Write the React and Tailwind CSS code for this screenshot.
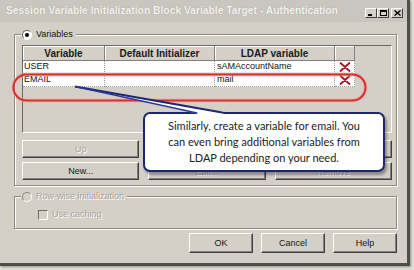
import React from "react";

function Btn({ label, disabled, className = "" }) {
  return (
    <div
      className={`flex items-center justify-center bg-[#d4d0c8] border border-t-white border-l-white border-r-[#404040] border-b-[#404040] shadow-[inset_-1px_-1px_0_#808080] text-[9px] leading-none ${
        disabled ? "text-[#a7a49d] [text-shadow:1px_1px_0_#fff]" : "text-[#151515]"
      } ${className}`}
    >
      {label}
    </div>
  );
}

function RedX() {
  return (
    <svg width="12" height="10" viewBox="0 0 12 10">
      <path d="M1.5 1 L10.5 9 M10.5 1 L1.5 9" stroke="#a3121b" strokeWidth="1.7" strokeLinecap="round" />
    </svg>
  );
}

function CapBtn({ children, className = "" }) {
  return (
    <div
      className={`w-[12px] h-[10px] bg-[#d4d0c8] border border-t-white border-l-white border-r-[#404040] border-b-[#404040] flex items-center justify-center ${className}`}
    >
      {children}
    </div>
  );
}

export default function App() {
  return (
    <div className="relative w-[414px] h-[270px] bg-[#dcdfd2] overflow-hidden font-['Liberation_Sans',Arial,sans-serif]">
      <div className="w-[410px] h-[266px] bg-[#d4d0c8] border-r-[3px] border-b-[3px] border-[#4e4d4a] shadow-[1px_1px_2px_rgba(0,0,0,0.35)] flex flex-col">
        {/* Title bar */}
        <div className="h-[22px] bg-[#c9c6bf] flex items-center pl-[6px] pr-[4px]">
          <div className="flex-1 whitespace-nowrap text-[10.3px] font-bold text-[#f4f3ef] [text-shadow:0_0_1px_rgba(120,118,110,0.6)]">
            Session Variable Initialization Block Variable Target - Authentication
          </div>
          <div className="flex items-center mt-[3px]">
            <CapBtn>
              <div className="w-[4px] h-[2px] bg-black mt-[4px] mr-[2px]" />
            </CapBtn>
            <CapBtn>
              <div className="w-[7px] h-[6px] border border-black border-t-2" />
            </CapBtn>
            <CapBtn className="ml-[2px]">
              <svg width="7" height="6" viewBox="0 0 7 6">
                <path d="M0.5 0.5 L6.5 5.5 M6.5 0.5 L0.5 5.5" stroke="#000" strokeWidth="1.4" />
              </svg>
            </CapBtn>
          </div>
        </div>

        {/* Content */}
        <div className="flex flex-col pl-[14px] pr-[10px]">
          {/* Variables group */}
          <div className="relative mt-[12px] h-[152px] border border-[#8c8981] shadow-[inset_1px_1px_0_#fff,1px_1px_0_#fff] pt-[10px] pl-[7px] pr-[4px]">
            <div className="absolute left-[6px] top-[-7px] flex items-center bg-[#d4d0c8] pl-[1px] pr-[3px] h-[13px]">
              <div className="w-[10px] h-[10px] rounded-full border border-t-[#6d6b66] border-l-[#6d6b66] border-r-white border-b-white bg-white flex items-center justify-center">
                <div className="w-[4px] h-[4px] rounded-full bg-black" />
              </div>
              <span className="ml-[4px] text-[9px] text-[#151515]">Variables</span>
            </div>

            {/* Table pane */}
            <div className="h-[88px] border border-t-[#6a6864] border-l-[#6a6864] border-r-white border-b-white bg-[#d4d0c8]">
              <div className="flex h-[15px] text-[10px] font-bold text-[#1a1a1a]">
                <div className="w-[82px] flex items-center justify-center border-r border-b border-[#808080] shadow-[inset_1px_1px_0_#fff]">Variable</div>
                <div className="w-[110px] flex items-center justify-center border-r border-b border-[#808080] shadow-[inset_1px_1px_0_#fff]">Default Initializer</div>
                <div className="w-[120px] flex items-center justify-center border-r border-b border-[#808080] shadow-[inset_1px_1px_0_#fff]">LDAP variable</div>
                <div className="w-[20px] border-r border-b border-[#808080] shadow-[inset_1px_1px_0_#fff]" />
              </div>
              {[
                ["USER", "sAMAccountName"],
                ["EMAIL", "mail"],
              ].map(([v, l]) => (
                <div key={v} className="flex h-[13px] text-[9px] text-[#111] bg-white w-[332px]">
                  <div className="w-[82px] pl-[1px] flex items-center border-r border-b border-dotted border-[#9a9a9a]">{v}</div>
                  <div className="w-[110px] border-r border-b border-dotted border-[#9a9a9a]" />
                  <div className="w-[120px] pl-[2px] flex items-center border-r border-b border-dotted border-[#9a9a9a]">{l}</div>
                  <div className="w-[20px] flex items-center justify-center border-r border-b border-dotted border-[#9a9a9a]">
                    <RedX />
                  </div>
                </div>
              ))}
            </div>

            {/* Buttons */}
            <div className="grid grid-cols-3 gap-x-[9px] gap-y-[4px] mt-[7px]">
              <Btn label="Up" disabled className="h-[18px]" />
              <Btn label="" disabled className="h-[18px]" />
              <Btn label="" disabled className="h-[18px]" />
              <Btn label="New..." className="h-[18px]" />
              <Btn label="Edit..." disabled className="h-[18px] pt-[3px]" />
              <Btn label="Remove" disabled className="h-[18px] pt-[3px]" />
            </div>
          </div>

          {/* Row-wise group */}
          <div className="relative mt-[10px] h-[33px] border border-[#8c8981] shadow-[inset_1px_1px_0_#fff,1px_1px_0_#fff] pt-[11px] pl-[23px]">
            <div className="absolute left-[6px] top-[-7px] flex items-center bg-[#d4d0c8] pl-[1px] pr-[3px] h-[13px]">
              <div className="w-[10px] h-[10px] rounded-full border border-t-[#8f8c85] border-l-[#8f8c85] border-r-white border-b-white bg-[#d4d0c8]" />
              <span className="ml-[4px] text-[9px] text-[#a7a49d] [text-shadow:1px_1px_0_#fff]">Row-wise initialization</span>
            </div>
            <div className="flex items-center">
              <div className="w-[10px] h-[10px] border border-t-[#6d6b66] border-l-[#6d6b66] border-r-white border-b-white bg-[#d4d0c8]" />
              <span className="ml-[4px] text-[9px] text-[#a7a49d] [text-shadow:1px_1px_0_#fff]">Use caching</span>
            </div>
          </div>

          {/* Bottom buttons */}
          <div className="flex justify-end gap-[8px] mt-[4px]">
            <Btn label="OK" className="w-[64px] h-[20px]" />
            <Btn label="Cancel" className="w-[64px] h-[20px]" />
            <Btn label="Help" className="w-[64px] h-[20px]" />
          </div>
        </div>
      </div>

      {/* Red highlight ring */}
      <svg className="absolute inset-0 pointer-events-none" width="414" height="270" viewBox="0 0 414 270">
        <rect x="13.5" y="74.5" width="352" height="26" rx="13" fill="none" stroke="#f0a0a0" strokeOpacity="0.45" strokeWidth="4.5" />
        <rect x="13.5" y="74.5" width="352" height="26" rx="13" fill="none" stroke="#d6302a" strokeWidth="2" />
      </svg>

      {/* Callout */}
      <div className="absolute left-[143px] top-[112px] w-[242px] h-[60px] bg-white border-2 border-[#1d2672] rounded-[7px] shadow-[2px_3px_3px_rgba(0,0,0,0.35)] flex items-center justify-center text-center text-[11px] leading-[16px] text-[#222] font-['Lato','Open_Sans',sans-serif]">
        <p>
          Similarly, create a variable for email. You
          <br />
          can even bring additional variables from
          <br />
          LDAP depending on your need.
        </p>
      </div>

      {/* Callout pointer */}
      <svg className="absolute inset-0 pointer-events-none" width="414" height="270" viewBox="0 0 414 270">
        <polygon points="75,86.5 225,113.5 197,113.5" fill="#fff" />
        <rect x="198" y="111" width="26" height="4" fill="#fff" />
        <line x1="75" y1="86.5" x2="225" y2="113" stroke="#1d2672" strokeWidth="2" />
        <line x1="75" y1="86.5" x2="197" y2="113" stroke="#2a3894" strokeWidth="1.3" />
      </svg>
    </div>
  );
}
